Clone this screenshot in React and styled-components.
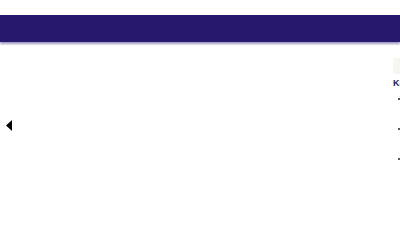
import React from "react";
import styled, { createGlobalStyle } from "styled-components";

const Global = createGlobalStyle`
  html, body {
    margin: 0;
    background: #ffffff;
    font-family: "Liberation Sans", Arial, sans-serif;
  }
`;

const Page = styled.div`
  width: 400px;
  height: 250px;
  overflow: hidden;
  padding-top: 15px;
  box-sizing: border-box;
`;

const Header = styled.header`
  height: 27px;
  background: #27186e;
  box-shadow: 0 2px 2px rgba(39, 24, 110, 0.45);
`;

const Carousel = styled.section`
  display: flex;
  align-items: flex-start;
  height: 208px;
  overflow: hidden;
`;

const Arrow = styled.button`
  flex: none;
  width: 18px;
  margin-top: 78px;
  padding: 0 0 0 6px;
  border: 0;
  background: none;
  display: flex;
`;

const Track = styled.div`
  flex: none;
  display: flex;
  gap: 8px;
`;

const Slide = styled.article`
  flex: none;
  width: ${({ width }) => width}px;
  padding-top: 16px;
`;

const Thumb = styled.div`
  width: 40px;
  height: 16px;
  background: linear-gradient(90deg, #f8f7f3, #efede7);
  border-radius: 2px;
  margin-bottom: 4px;
`;

const Title = styled.h3`
  margin: 0 0 6px;
  font-size: 9px;
  font-weight: bold;
  color: #1e1466;
`;

const List = styled.ul`
  margin: 0;
  padding-left: 16px;
  font-size: 8px;
  color: #222;
  li {
    height: 30px;
  }
`;

export default function App() {
  return (
    <>
      <Global />
      <Page>
        <Header />
        <Carousel>
          <Arrow aria-label="previous">
            <svg width="6" height="11" viewBox="0 0 6 11">
              <path d="M6 0 L0 5.5 L6 11 Z" fill="#000" />
            </svg>
          </Arrow>
          <Track>
            <Slide width={367} />
            <Slide width={200}>
              <Thumb />
              <Title>Key features</Title>
              <List>
                <li>Fast setup</li>
                <li>Secure</li>
                <li>Reliable</li>
              </List>
            </Slide>
          </Track>
        </Carousel>
      </Page>
    </>
  );
}
